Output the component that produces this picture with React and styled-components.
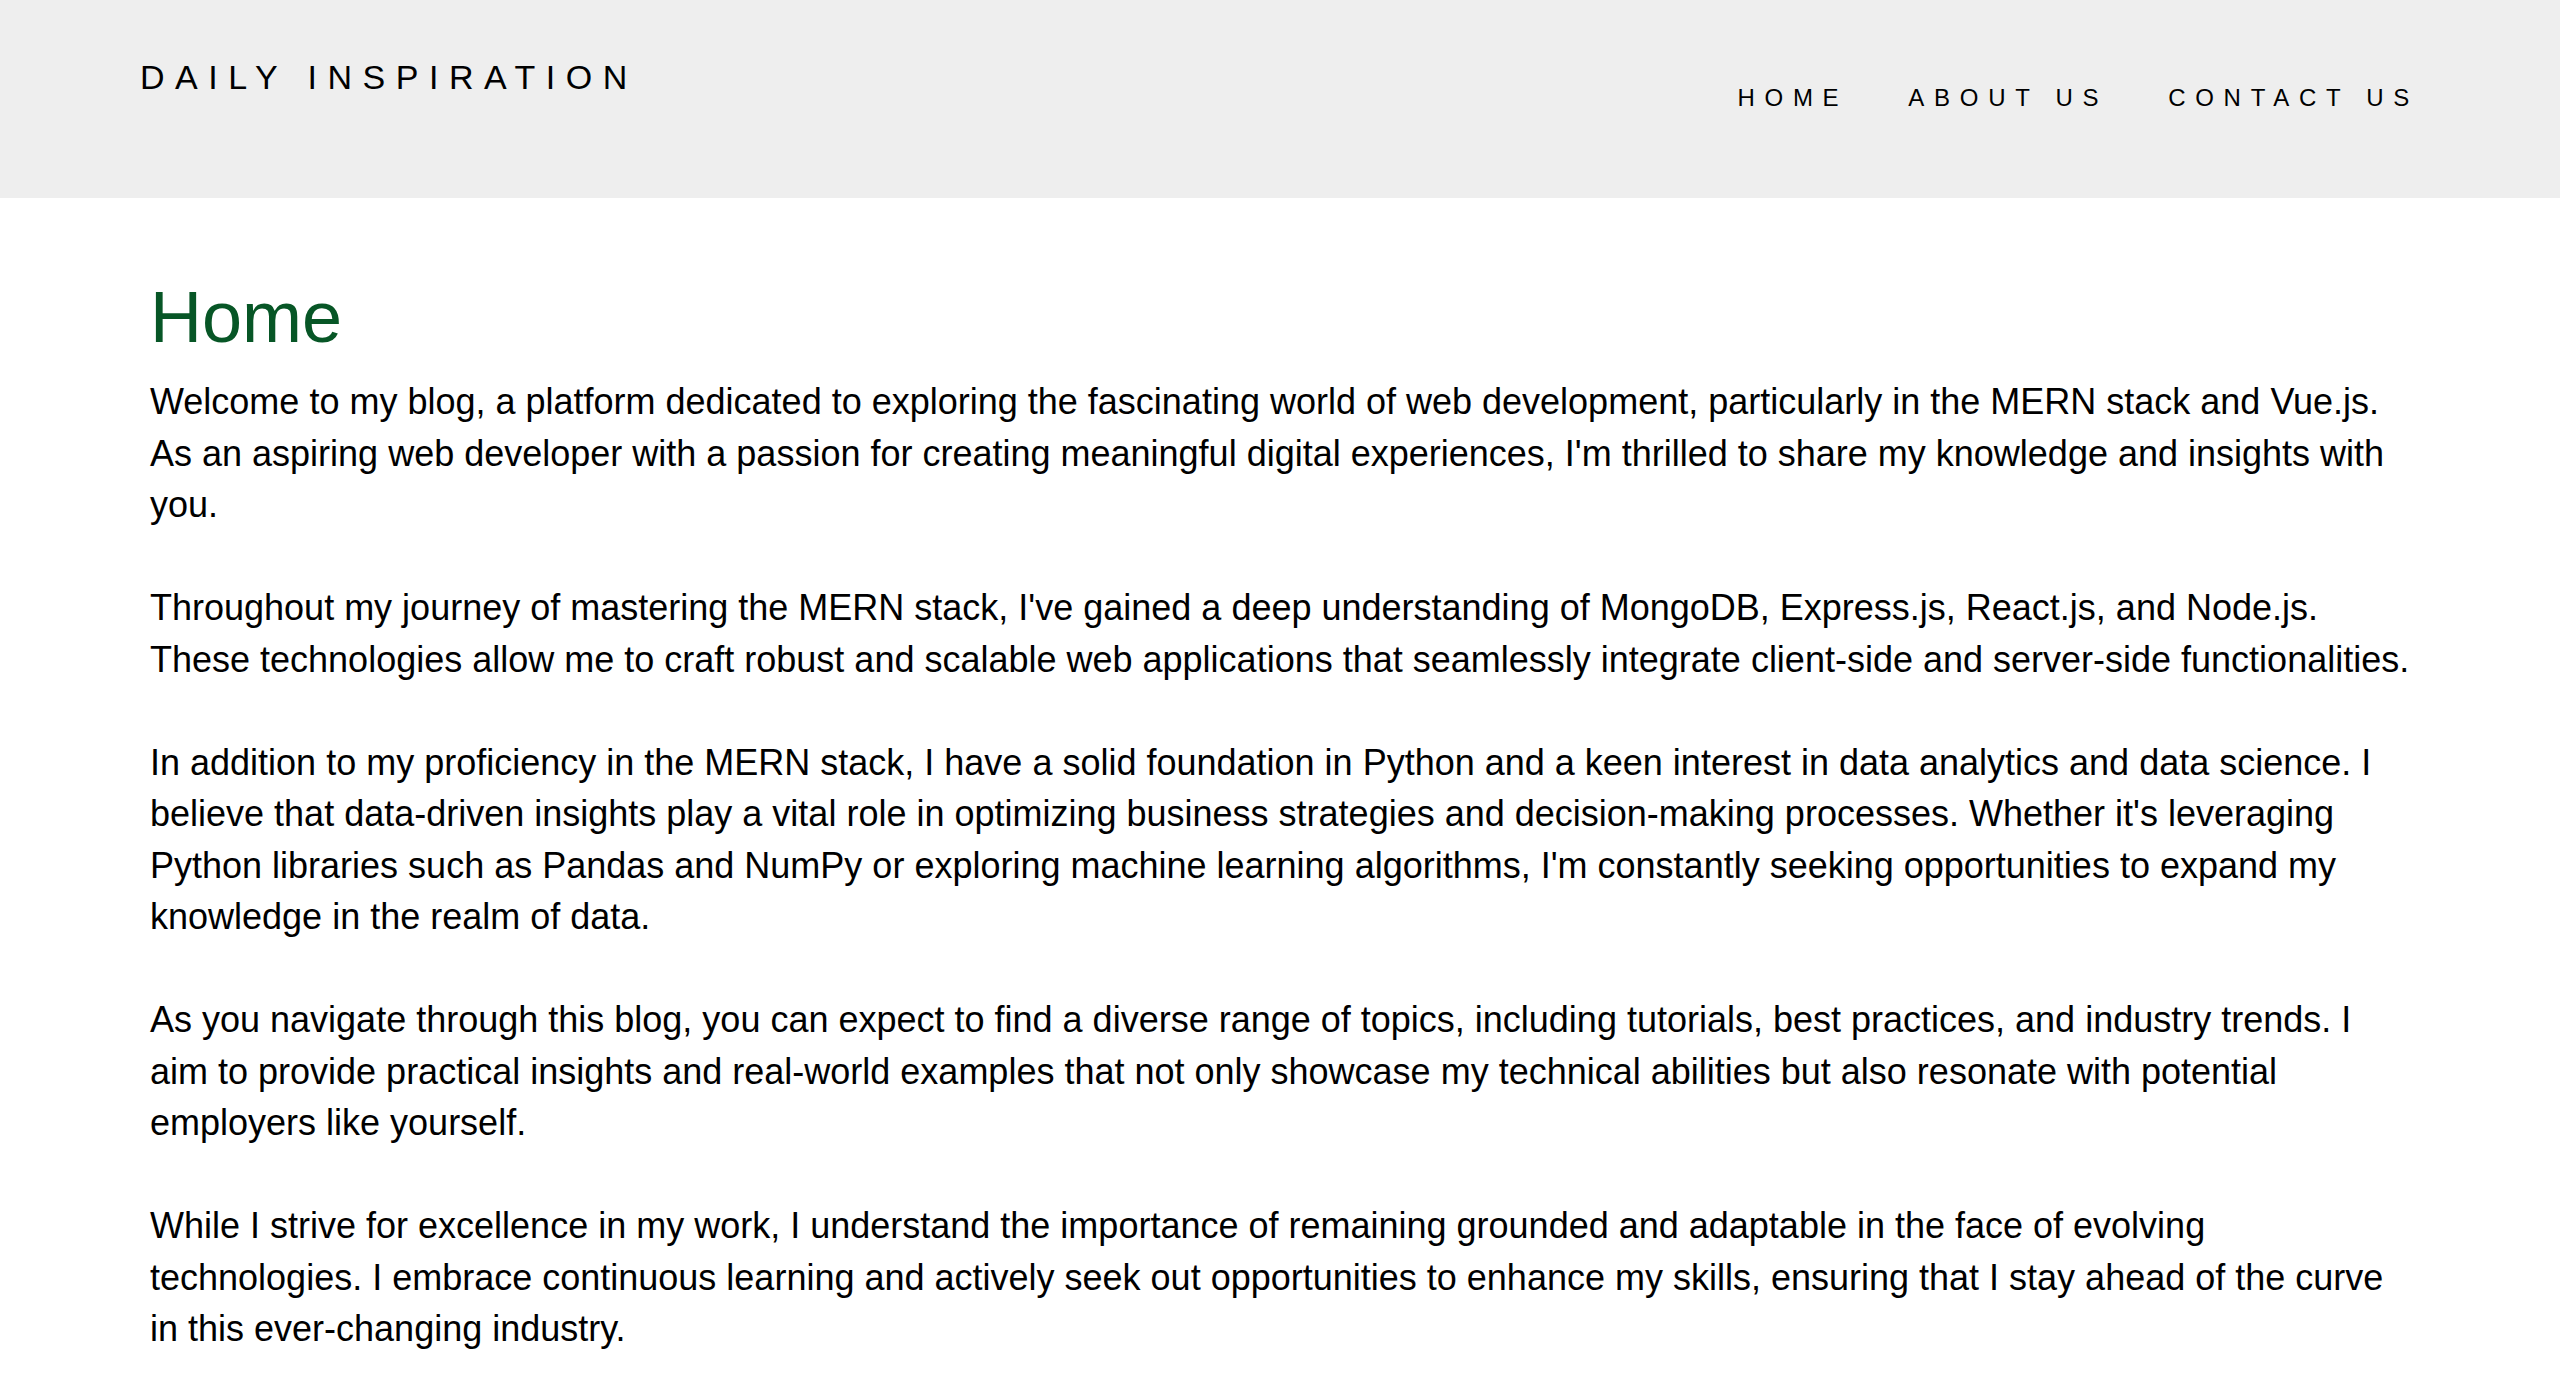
import React from 'react';
import styled, { createGlobalStyle } from 'styled-components';

const GlobalStyle = createGlobalStyle`
  html, body {
    margin: 0;
    padding: 0;
    background: #fff;
  }
  body {
    font-family: "Liberation Sans", Arial, Helvetica, sans-serif;
    color: #000;
  }
`;

const Header = styled.header`
  height: 198px;
  box-sizing: border-box;
  background: #eeeeee;
  padding: 60px 141px 0 140px;
  display: flex;
  justify-content: space-between;
  align-items: flex-start;
`;

const Logo = styled.div`
  font-size: 34px;
  line-height: 1;
  letter-spacing: 10.5px;
  text-transform: uppercase;
`;

const Nav = styled.nav`
  margin-top: 26px;
  display: flex;
  gap: 60px;
`;

const NavLink = styled.a`
  font-size: 24px;
  line-height: 1;
  letter-spacing: 9.7px;
  text-transform: uppercase;
  color: #000;
  text-decoration: none;
  cursor: pointer;
`;

const Main = styled.main`
  padding: 83px 150px 0;
`;

const Title = styled.h1`
  margin: 0 0 23px;
  font-size: 72px;
  font-weight: 400;
  line-height: 1;
  color: #075626;
`;

const Paragraph = styled.p`
  margin: 0 0 51.5px;
  font-size: 36px;
  line-height: 51.5px;

  &:last-child {
    margin-bottom: 0;
  }
`;

const paragraphs = [
  "Welcome to my blog, a platform dedicated to exploring the fascinating world of web development, particularly in the MERN stack and Vue.js. As an aspiring web developer with a passion for creating meaningful digital experiences, I'm thrilled to share my knowledge and insights with you.",
  "Throughout my journey of mastering the MERN stack, I've gained a deep understanding of MongoDB, Express.js, React.js, and Node.js. These technologies allow me to craft robust and scalable web applications that seamlessly integrate client-side and server-side functionalities.",
  "In addition to my proficiency in the MERN stack, I have a solid foundation in Python and a keen interest in data analytics and data science. I believe that data-driven insights play a vital role in optimizing business strategies and decision-making processes. Whether it's leveraging Python libraries such as Pandas and NumPy or exploring machine learning algorithms, I'm constantly seeking opportunities to expand my knowledge in the realm of data.",
  "As you navigate through this blog, you can expect to find a diverse range of topics, including tutorials, best practices, and industry trends. I aim to provide practical insights and real-world examples that not only showcase my technical abilities but also resonate with potential employers like yourself.",
  "While I strive for excellence in my work, I understand the importance of remaining grounded and adaptable in the face of evolving technologies. I embrace continuous learning and actively seek out opportunities to enhance my skills, ensuring that I stay ahead of the curve in this ever-changing industry.",
];

const App = () => {
  return (
    <>
      <GlobalStyle />
      <Header>
        <Logo>Daily Inspiration</Logo>
        <Nav>
          <NavLink>Home</NavLink>
          <NavLink>About Us</NavLink>
          <NavLink>Contact Us</NavLink>
        </Nav>
      </Header>
      <Main>
        <Title>Home</Title>
        {paragraphs.map((text, i) => (
          <Paragraph key={i}>{text}</Paragraph>
        ))}
      </Main>
    </>
  );
};

export default App;
